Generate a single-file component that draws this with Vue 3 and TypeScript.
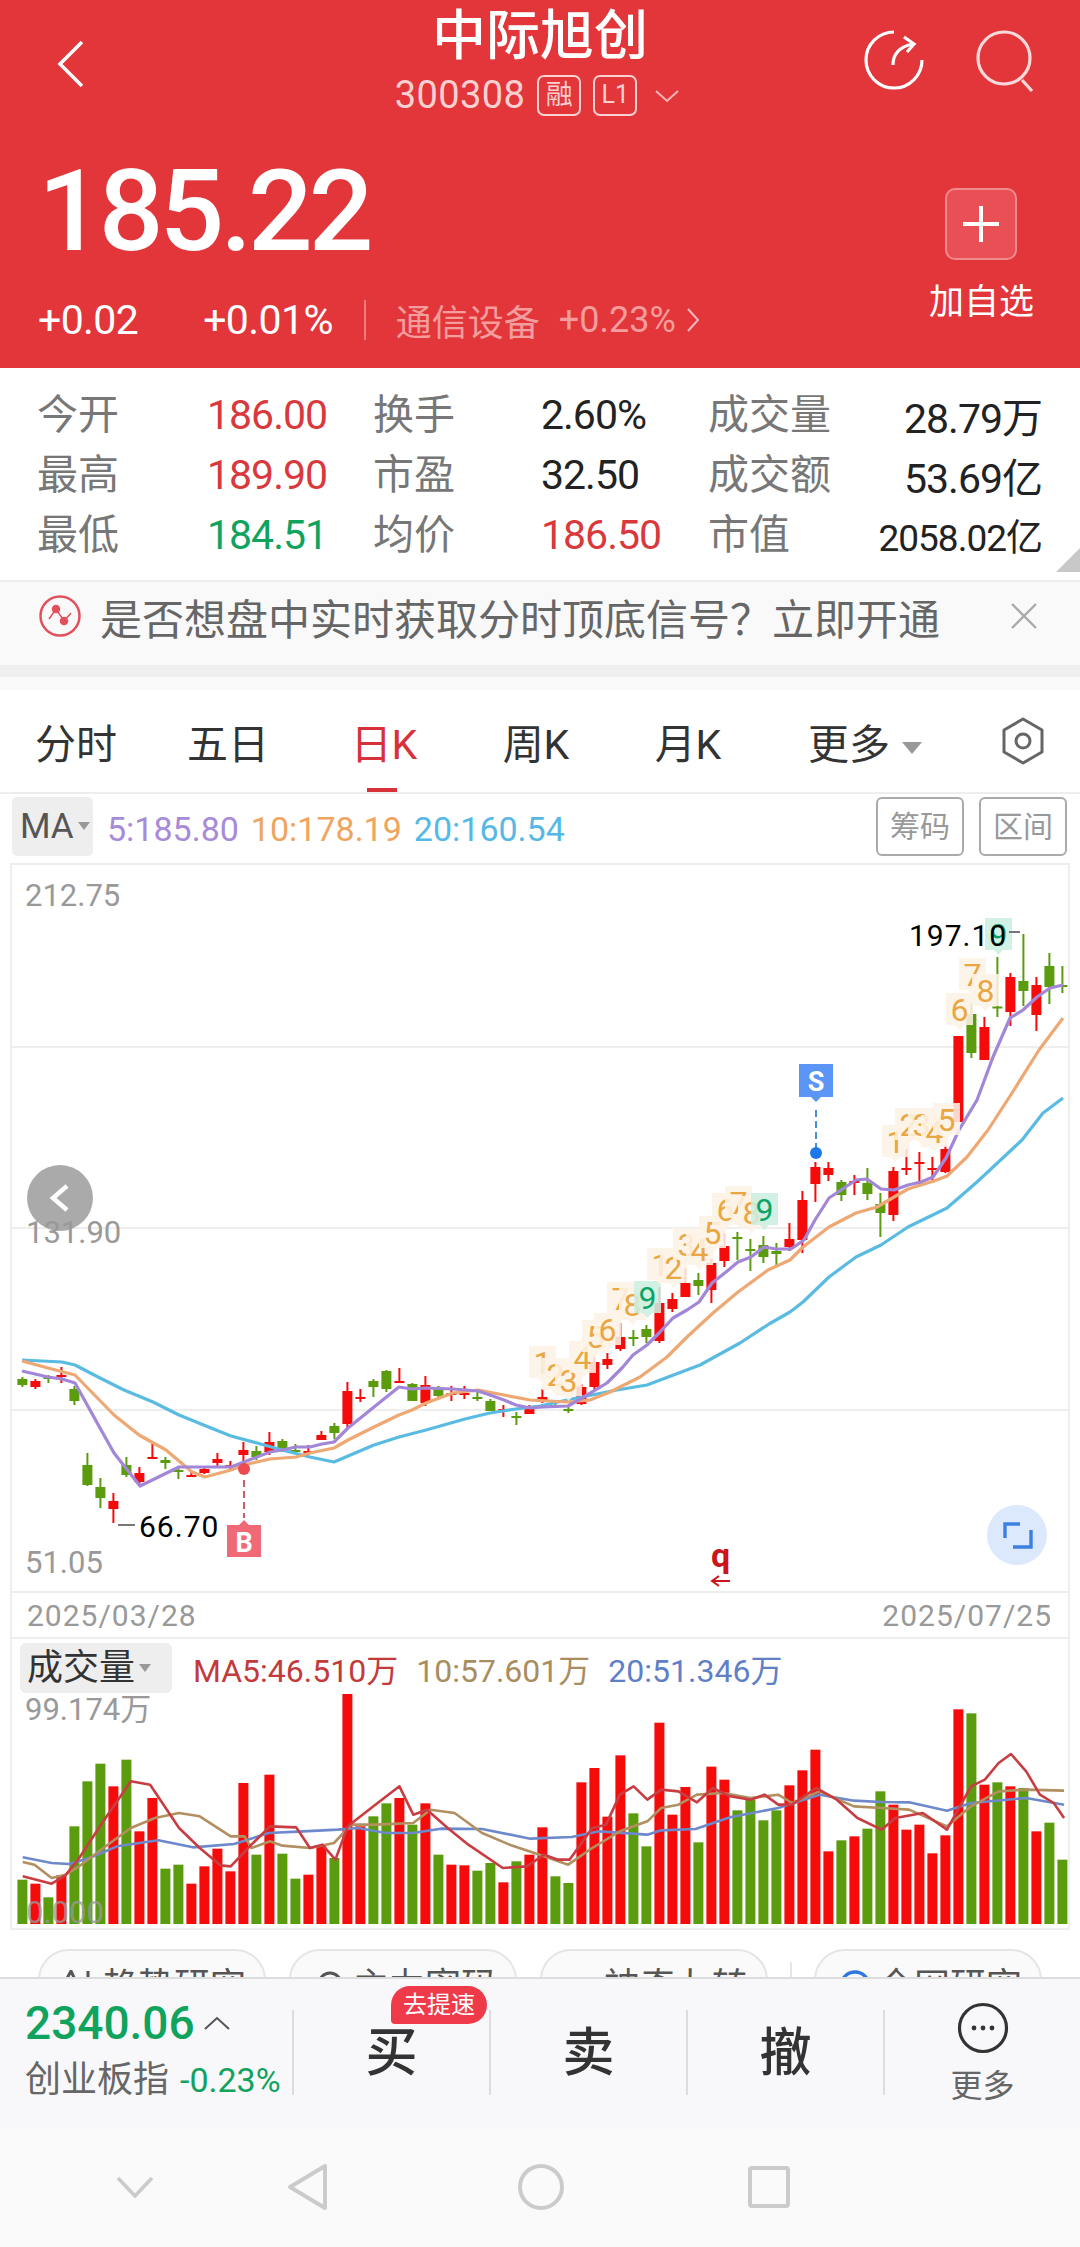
<template>
  <div class="page">
    <header class="quote">
      <div class="nav">
        <svg class="back" width="28" height="48" viewBox="0 0 28 48" fill="none" stroke="#fff" stroke-width="3.5">
          <path d="M25 2 L3 24 L25 46" />
        </svg>
        <div class="name">
          <div class="title">中际旭创</div>
          <div class="code-row">
            <span class="code">300308</span>
            <span class="tag">融</span>
            <span class="tag tag-l1">L1</span>
            <svg width="24" height="14" viewBox="0 0 24 14" fill="none" stroke="#f7b6b8" stroke-width="2">
              <path d="M1 2 L12 12 L23 2" />
            </svg>
          </div>
        </div>
        <div class="actions">
          <svg width="62" height="62" viewBox="0 0 62 62" fill="none" stroke="#fff" stroke-width="3.2">
            <path d="M31 3 A28 28 0 1 0 59 31" />
            <path d="M30 36 Q30 19 50 15" />
            <path d="M41 8 L51 15 L44 23" />
          </svg>
          <svg width="64" height="66" viewBox="0 0 64 66" fill="none" stroke="#fbd9da" stroke-width="3.2">
            <circle cx="30" cy="29" r="26" />
            <path d="M48 51 L58 62" />
          </svg>
        </div>
      </div>
      <div class="quote-body">
        <div>
          <div class="price">185.22</div>
          <div class="change-row">
            <span class="chg">+0.02</span>
            <span class="chg chg-pct">+0.01%</span>
            <span class="sep"></span>
            <span class="sector">通信设备</span>
            <span class="sector-pct">+0.23%</span>
            <svg width="14" height="26" viewBox="0 0 14 26" fill="none" stroke="#f7b6b8" stroke-width="2">
              <path d="M2 2 L12 13 L2 24" />
            </svg>
          </div>
        </div>
        <div class="add">
          <div class="add-btn">
            <svg width="38" height="38" viewBox="0 0 38 38" stroke="#fff" stroke-width="4">
              <path d="M19 1 V37 M1 19 H37" />
            </svg>
          </div>
          <div class="add-text">加自选</div>
        </div>
      </div>
    </header>

    <section class="stats">
      <template v-for="row in stats" :key="row[0].label">
        <template v-for="cell in row" :key="cell.label">
          <span class="stat-label">{{ cell.label }}</span>
          <span class="stat-value" :class="[cell.tone, cell.small ? 'small' : '']">{{ cell.value }}</span>
        </template>
      </template>
      <span class="corner"></span>
    </section>

    <div class="banner">
      <svg width="44" height="44" viewBox="0 0 44 44" fill="none" stroke="#e2505c" stroke-width="2.5">
        <circle cx="22" cy="22" r="19.5" />
        <path d="M11 25 L18 15 L26 27 L33 19" stroke-width="1.5" />
        <circle cx="18" cy="15" r="3" fill="#e2505c" />
        <circle cx="26" cy="27" r="3" fill="#e2505c" />
      </svg>
      <span class="banner-text">是否想盘中实时获取分时顶底信号？立即开通</span>
      <svg class="banner-close" width="28" height="28" viewBox="0 0 28 28" stroke="#aaa" stroke-width="2.4">
        <path d="M2 2 L26 26 M26 2 L2 26" />
      </svg>
    </div>
    <div class="band"></div>
    <div class="band-light"></div>

    <nav class="tabs">
      <span class="tab">分时</span>
      <span class="tab">五日</span>
      <span class="tab active">日K</span>
      <span class="tab">周K</span>
      <span class="tab">月K</span>
      <span class="tab more">更多<i class="caret"></i></span>
      <svg class="gear" width="44" height="48" viewBox="0 0 44 48" fill="none" stroke="#666" stroke-width="3">
        <path d="M22 2 L41 13 V35 L22 46 L3 35 V13 Z" stroke-linejoin="round" />
        <circle cx="22" cy="24" r="7" />
      </svg>
    </nav>

    <div class="ma-row">
      <span class="ma-box">MA<i class="caret caret-sm"></i></span>
      <span class="ma ma5">5:185.80</span>
      <span class="ma ma10">10:178.19</span>
      <span class="ma ma20">20:160.54</span>
      <span class="ma-btns">
        <span class="ma-btn">筹码</span>
        <span class="ma-btn">区间</span>
      </span>
    </div>

    <div class="frame">
      <svg class="kline" width="1056" height="726" viewBox="12 865 1056 726">
        <line v-for="y in [1047, 1228, 1410]" :key="y" x1="12" x2="1068" :y1="y" :y2="y" stroke="#eeeeee" stroke-width="2" />

        <g v-for="c in candles" :key="c.x" :fill="c.color" :stroke="c.color">
          <line :x1="c.x" :x2="c.x" :y1="c.hi" :y2="c.lo" stroke-width="2" />
          <rect :x="c.x - 5" :y="c.top" width="10" :height="c.h" stroke="none" />
        </g>

        <path :d="toPath(maLine20)" class="line" stroke="#5abbe2" />
        <path :d="toPath(maLine10)" class="line" stroke="#eda874" />
        <path :d="toPath(maLine5)" class="line" stroke="#a287d8" />

        <g v-for="(b, i) in badges" :key="i">
          <path
            :d="`M${b.x - 13} ${b.y - 17} h27 v32 h-9 l-4.5 5 l-4.5 -5 h-9 Z`"
            :fill="b.n === 9 ? '#cdeee0' : '#fdf2e6'"
            fill-opacity="0.88"
          />
          <text :x="b.x + 0.5" :y="b.y + 11" class="badge-num" :fill="b.n === 9 ? '#0ca567' : '#e9a643'">{{ b.n }}</text>
        </g>

        <text x="909" y="946" class="hl">197.10</text>
        <line x1="1009" x2="1020" y1="932" y2="932" stroke="#777" stroke-width="2" />
        <line x1="118" x2="135" y1="1525" y2="1525" stroke="#777" stroke-width="2" />
        <text x="139" y="1537" class="hl">66.70</text>

        <path d="M799 1064 h34 v33 h-12 l-5 5 l-5 -5 h-12 Z" fill="#5b95f5" />
        <text x="816" y="1091" class="mark">S</text>
        <line x1="816" x2="816" y1="1110" y2="1148" stroke="#4b8dd6" stroke-width="2" stroke-dasharray="7 4" />
        <circle cx="816" cy="1153" r="6" fill="#1f78ea" />

        <circle cx="244" cy="1469" r="6" fill="#ee4a52" />
        <line x1="244" x2="244" y1="1480" y2="1518" stroke="#c8606c" stroke-width="2" stroke-dasharray="7 4" />
        <path d="M227 1525 h12 l5 -5 l5 5 h12 v32 h-34 Z" fill="#ef6a76" />
        <text x="244" y="1552" class="mark">B</text>

        <text x="25" y="906" class="axis">212.75</text>
        <circle cx="60" cy="1198" r="33" fill="#a3a3a3" fill-opacity="0.92" />
        <path d="M67 1186 L53 1198 L67 1210" fill="none" stroke="#fff" stroke-width="4.5" />
        <text x="26" y="1243" class="axis">131.90</text>
        <text x="25" y="1573" class="axis">51.05</text>

        <circle cx="1017" cy="1535" r="30" fill="#dce8fb" />
        <path d="M1005 1538 V1524 H1020 M1013 1547 H1031 V1530" fill="none" stroke="#3d7fe0" stroke-width="3.4" />

        <text x="711" y="1567" class="signal">q</text>
        <path d="M730 1581 H713 M719 1576 L712 1581 L719 1586" fill="none" stroke="#c9151b" stroke-width="2" />
      </svg>

      <div class="dates">
        <span>2025/03/28</span>
        <span>2025/07/25</span>
      </div>

      <div class="vol-head">
        <span class="vol-box">成交量<i class="caret caret-sm"></i></span>
        <span class="vol-ma v5">MA5:46.510万</span>
        <span class="vol-ma v10">10:57.601万</span>
        <span class="vol-ma v20">20:51.346万</span>
      </div>
      <svg class="vol" width="1056" height="232" viewBox="12 1696 1056 232">
        <rect
          v-for="b in bars"
          :key="b.x"
          :x="b.x - 5"
          :y="b.y"
          width="10"
          :height="1926 - b.y"
          :fill="b.color"
        />
        <path :d="toPath(volLine20)" class="line" stroke="#6e88cc" />
        <path :d="toPath(volLine10)" class="line" stroke="#b28f60" />
        <path :d="toPath(volLine5)" class="line" stroke="#c93d42" />
        <text x="25" y="1722" class="axis">99.174万</text>
        <text x="26" y="1925" class="axis faint">0.000</text>
      </svg>
    </div>

    <div class="chips">
      <span class="chip">
        <svg class="chip-icon" width="34" height="14" viewBox="0 0 34 14" fill="none" stroke="#555" stroke-width="3">
          <path d="M2 14 L9 1 L15 14 M26 1 V14" />
        </svg>
        趋势研究
      </span>
      <span class="chip">
        <svg class="chip-icon" width="34" height="14" viewBox="0 0 34 14" fill="none" stroke="#555" stroke-width="3">
          <circle cx="17" cy="14" r="11" />
        </svg>
        主力密码
      </span>
      <span class="chip">
        <svg class="chip-icon" width="34" height="14" viewBox="0 0 34 14" fill="#3d7fe0">
          <circle cx="8" cy="11" r="3" />
          <circle cx="24" cy="11" r="3" />
        </svg>
        神奇九转
      </span>
      <span class="chip-sep"></span>
      <span class="chip">
        <svg class="chip-icon" width="34" height="14" viewBox="0 0 34 14" fill="none" stroke="#2f76e0" stroke-width="3.4">
          <circle cx="17" cy="16" r="14" />
          <path d="M5 11 H29" />
        </svg>
        全网研究
      </span>
    </div>

    <div class="trade">
      <div class="index">
        <div class="index-top">
          <span class="index-val">2340.06</span>
          <svg width="26" height="14" viewBox="0 0 26 14" fill="none" stroke="#555" stroke-width="2">
            <path d="M1 13 L13 2 L25 13" />
          </svg>
        </div>
        <div class="index-bottom">
          <span class="index-name">创业板指</span>
          <span class="index-pct">-0.23%</span>
        </div>
      </div>
      <div class="act">
        买
        <span class="speed">去提速</span>
      </div>
      <div class="act">卖</div>
      <div class="act">撤</div>
      <div class="act more-act">
        <svg width="52" height="52" viewBox="0 0 52 52">
          <circle cx="26" cy="26" r="23.5" fill="none" stroke="#333" stroke-width="3.2" />
          <circle cx="17" cy="26" r="2.4" fill="#333" />
          <circle cx="26" cy="26" r="2.4" fill="#333" />
          <circle cx="35" cy="26" r="2.4" fill="#333" />
        </svg>
        <span>更多</span>
      </div>
    </div>

    <div class="sysnav">
      <svg width="38" height="22" viewBox="0 0 38 22" fill="none" stroke="#cbcbcb" stroke-width="3.6">
        <path d="M2 2 L19 20 L36 2" />
      </svg>
      <svg width="42" height="48" viewBox="0 0 42 48" fill="none" stroke="#cbcbcb" stroke-width="4">
        <path d="M38 3 V45 L3 24 Z" stroke-linejoin="round" />
      </svg>
      <svg width="48" height="48" viewBox="0 0 48 48" fill="none" stroke="#cbcbcb" stroke-width="4">
        <circle cx="24" cy="24" r="21" />
      </svg>
      <svg width="42" height="42" viewBox="0 0 42 42" fill="none" stroke="#cbcbcb" stroke-width="4">
        <rect x="2" y="2" width="38" height="38" rx="2" />
      </svg>
    </div>
  </div>
</template>

<script setup lang="ts">
type Point = [number, number]

const RED = '#f60b0b'
const GREEN = '#5a9c0e'

// x of the i-th trading day, shared by the candles and the volume bars
const dayX = (i: number) => 22.4 + 13 * i

const stats = [
  [
    { label: '今开', value: '186.00', tone: 'up' },
    { label: '换手', value: '2.60%', tone: '' },
    { label: '成交量', value: '28.79万', tone: 'end' },
  ],
  [
    { label: '最高', value: '189.90', tone: 'up' },
    { label: '市盈', value: '32.50', tone: '' },
    { label: '成交额', value: '53.69亿', tone: 'end' },
  ],
  [
    { label: '最低', value: '184.51', tone: 'down' },
    { label: '均价', value: '186.50', tone: 'up' },
    { label: '市值', value: '2058.02亿', tone: 'end', small: true },
  ],
]

// high, body top, body bottom, low, 1 = red
const rawCandles: number[][] = [
  [1377, 1379, 1385, 1387, 0], [1379, 1381, 1387, 1389, 1], [1375, 1377, 1379, 1383, 0], [1367, 1375, 1377, 1383, 1],
  [1386, 1389, 1401, 1405, 0], [1453, 1465, 1485, 1486, 0], [1478, 1487, 1498, 1508, 0], [1493, 1501, 1509, 1523, 1],
  [1457, 1465, 1475, 1477, 0], [1467, 1473, 1482, 1485, 1], [1443, 1457, 1458, 1459, 1], [1457, 1460, 1463, 1469, 0],
  [1467, 1470, 1471, 1479, 0], [1470, 1475, 1477, 1477, 1], [1468, 1469, 1473, 1474, 1], [1453, 1459, 1463, 1467, 1],
  [1461, 1465, 1466, 1470, 1], [1442, 1450, 1455, 1461, 1], [1446, 1451, 1457, 1460, 0], [1432, 1442, 1452, 1455, 1],
  [1439, 1441, 1450, 1452, 0], [1444, 1450, 1451, 1454, 0], [1445, 1451, 1451, 1454, 1], [1431, 1435, 1440, 1440, 1],
  [1423, 1426, 1433, 1439, 0], [1382, 1391, 1424, 1429, 1], [1389, 1397, 1399, 1402, 1], [1379, 1381, 1387, 1397, 0],
  [1370, 1371, 1389, 1392, 0], [1368, 1381, 1382, 1382, 1], [1383, 1384, 1401, 1401, 0], [1376, 1385, 1403, 1406, 1],
  [1386, 1389, 1396, 1397, 0], [1386, 1393, 1395, 1401, 1], [1386, 1393, 1394, 1399, 1], [1389, 1397, 1398, 1401, 0],
  [1399, 1401, 1411, 1411, 0], [1405, 1409, 1411, 1417, 1], [1412, 1416, 1417, 1425, 0], [1405, 1409, 1414, 1414, 1],
  [1389, 1397, 1402, 1403, 1], [1400, 1405, 1405.5, 1408, 0], [1406, 1409, 1410, 1413, 0], [1384, 1387, 1404, 1405, 1],
  [1357, 1362, 1387, 1389, 1], [1353, 1359, 1365, 1369, 1], [1323, 1337, 1349, 1351, 1], [1330, 1337, 1338, 1346, 0],
  [1325, 1329, 1337, 1343, 0], [1287, 1303, 1341, 1343, 1], [1293, 1299, 1309, 1312, 1], [1268, 1283, 1297, 1297, 1],
  [1273, 1280, 1286, 1295, 0], [1259, 1263, 1290, 1303, 1], [1233, 1246, 1261, 1267, 1], [1232, 1237, 1238, 1260, 0],
  [1239, 1249, 1250, 1271, 0], [1236, 1245, 1257, 1263, 0], [1243, 1251, 1254, 1265, 0], [1223, 1239, 1247, 1251, 1],
  [1191, 1200, 1240, 1253, 1], [1162, 1167, 1184, 1202, 1], [1162, 1168, 1175, 1181, 1], [1180, 1182, 1195, 1201, 0],
  [1175, 1181, 1182, 1195, 1], [1168, 1183, 1194, 1200, 0], [1193, 1204, 1213, 1237, 0], [1167, 1171, 1215, 1221, 1],
  [1149, 1168, 1169, 1175, 1], [1152, 1162, 1163, 1184, 1], [1157, 1168, 1169, 1182, 1], [1145, 1149, 1172, 1173, 1],
  [1036, 1036, 1122, 1122, 1], [1003, 1014, 1053, 1058, 0], [1017, 1027, 1060, 1060, 1], [957, 1006.5, 1008, 1017, 0],
  [973, 977, 1012, 1026, 1], [934, 981, 991, 1006, 0], [977, 985, 1015, 1031, 1], [953, 966, 987, 1004, 0],
  [966, 985, 986, 993, 0],
]

const candles = rawCandles.map((c, i) => ({
  x: dayX(i),
  hi: c[0],
  top: c[1],
  h: Math.max(c[2] - c[1], 2),
  lo: c[3],
  color: c[4] ? RED : GREEN,
}))

const maLine5: Point[] = [
  [22, 1371], [48, 1377], [62, 1379], [75, 1383], [100, 1428], [114, 1453], [140, 1486], [179, 1467], [231, 1467],
  [244, 1462], [270, 1452], [282, 1450], [296, 1447], [310, 1447], [322, 1444], [334, 1442], [348, 1428], [374, 1407],
  [399, 1387], [412, 1389], [426, 1388], [453, 1389], [478, 1391], [490, 1395], [504, 1400], [516, 1405], [530, 1408],
  [543, 1407], [568, 1406], [582, 1398], [607, 1383], [622, 1368], [633, 1355], [647, 1345], [660, 1332], [673, 1318],
  [687, 1310], [699, 1302], [712, 1283], [726, 1272], [738, 1262], [751, 1257], [764, 1247], [776, 1249], [791, 1249],
  [804, 1240], [815, 1220], [829, 1198], [841, 1190], [856, 1180], [867, 1179], [881, 1189], [894, 1190], [908, 1185],
  [921, 1182], [933, 1177], [946, 1158], [959, 1130], [977, 1100], [993, 1057], [1010, 1018], [1023, 1010], [1037, 997],
  [1050, 988], [1063, 985],
]

const maLine10: Point[] = [
  [22, 1361], [48, 1368], [75, 1375], [114, 1415], [139, 1435], [166, 1450], [192, 1472], [205, 1477], [231, 1470],
  [244, 1465], [270, 1459], [296, 1457], [310, 1453], [334, 1448], [348, 1440], [374, 1427], [399, 1415], [412, 1410],
  [426, 1403], [453, 1393], [478, 1390], [504, 1395], [530, 1400], [568, 1402], [590, 1400], [610, 1392], [640, 1377],
  [667, 1357], [687, 1337], [713, 1313], [738, 1292], [768, 1270], [790, 1260], [803, 1247], [829, 1227], [856, 1213],
  [877, 1207], [894, 1197], [908, 1189], [934, 1181], [947, 1176], [967, 1157], [988, 1130], [1012, 1093], [1039, 1050],
  [1063, 1018],
]

const maLine20: Point[] = [
  [22, 1360], [62, 1362], [75, 1365], [100, 1378], [124, 1390], [153, 1402], [179, 1415], [206, 1426], [231, 1436],
  [257, 1443], [282, 1450], [310, 1457], [334, 1462], [374, 1445], [399, 1437], [426, 1430], [465, 1419], [490, 1413],
  [516, 1409], [540, 1406], [567, 1400], [617, 1390], [647, 1385], [700, 1365], [740, 1343], [769, 1324], [790, 1312],
  [803, 1302], [829, 1277], [856, 1257], [881, 1245], [908, 1227], [947, 1208], [977, 1182], [1022, 1140], [1043, 1113],
  [1063, 1098],
]

const badgeSpots: number[][] = [
  [542, 1363, 1], [555, 1375, 2], [568, 1381, 3], [582, 1358, 4], [595, 1337, 5], [607, 1330, 6], [620, 1299, 7],
  [632, 1305, 8], [647, 1298, 9], [660, 1265, 1], [673, 1268, 2], [686, 1245, 3], [699, 1250, 4], [712, 1233, 5],
  [725, 1210, 6], [738, 1203, 7], [751, 1213, 8], [764, 1210, 9], [895, 1142, 1], [908, 1125, 2], [921, 1125, 3],
  [934, 1132, 4], [946, 1120, 5], [959, 1010, 6], [972, 975, 7], [985, 991, 8], [998, 935, 9],
]
const badges = badgeSpots.map(([x, y, n]) => ({ x, y, n }))

// bar tops, 1 = red
const barTops: number[][] = [
  [785, 0], [797, 1], [838, 0], [772, 1], [625, 0], [490, 0], [437, 0], [505, 1], [425, 0], [640, 1], [540, 1],
  [752, 0], [740, 0], [797, 1], [745, 1], [692, 1], [760, 1], [495, 1], [710, 0], [470, 1], [707, 0], [782, 0],
  [770, 1], [685, 1], [720, 0], [227, 1], [625, 1], [595, 0], [556, 0], [540, 1], [620, 0], [556, 1], [710, 0],
  [740, 1], [742, 1], [758, 0], [735, 0], [793, 1], [730, 0], [710, 1], [628, 1], [775, 0], [795, 0], [493, 1],
  [450, 1], [596, 1], [412, 1], [586, 0], [685, 0], [314, 1], [590, 1], [507, 1], [673, 0], [446, 1], [485, 1],
  [577, 0], [545, 0], [607, 0], [577, 0], [502, 1], [457, 1], [395, 1], [700, 1], [667, 0], [655, 1], [632, 0],
  [520, 0], [560, 1], [635, 1], [620, 1], [706, 1], [652, 1], [274, 1], [286, 0], [500, 1], [493, 0], [505, 1],
  [510, 0], [640, 1], [614, 0], [725, 0],
]
const volY = (v: number) => 1620 + v / 3
const bars = barTops.map(([top, red], i) => ({ x: dayX(i), y: volY(top), color: red ? RED : GREEN }))

const volPoints = (list: Point[]): Point[] => list.map(([x, y]) => [x / 1.452, volY(y)])

const volLine5 = volPoints([
  [33, 775], [75, 797], [95, 772], [115, 720], [150, 610], [190, 490], [218, 500], [260, 630], [290, 690], [320, 742],
  [335, 745], [365, 680], [392, 625], [430, 628], [450, 690], [468, 680], [487, 725], [505, 625], [545, 560], [580, 505],
  [600, 590], [620, 575], [650, 630], [680, 680], [730, 750], [765, 745], [790, 710], [810, 725], [827, 725], [860, 630],
  [880, 620], [900, 530], [920, 505], [940, 545], [960, 515], [985, 520], [1012, 553], [1035, 510], [1060, 535], [1090, 545],
  [1110, 530], [1130, 560], [1150, 560], [1185, 510], [1215, 545], [1245, 600], [1280, 635], [1300, 600], [1340, 585],
  [1375, 635], [1410, 505], [1430, 485], [1450, 435], [1468, 408], [1490, 460], [1510, 530], [1530, 555], [1545, 600],
])

const volLine10 = volPoints([
  [33, 732], [50, 740], [75, 780], [95, 770], [115, 745], [150, 690], [190, 630], [225, 600], [260, 585], [290, 595],
  [335, 655], [355, 655], [365, 690], [392, 670], [410, 683], [450, 690], [485, 675], [510, 620], [545, 620], [600, 615],
  [625, 575], [660, 585], [700, 645], [740, 680], [790, 715], [825, 740], [860, 690], [900, 640], [940, 610], [960, 570],
  [985, 560], [1012, 530], [1050, 525], [1090, 540], [1130, 530], [1150, 555], [1190, 520], [1240, 565], [1280, 570],
  [1320, 575], [1375, 625], [1410, 565], [1450, 520], [1490, 515], [1545, 518],
])

const volLine20 = volPoints([
  [33, 718], [75, 735], [100, 738], [130, 720], [170, 685], [230, 667], [280, 688], [340, 678], [390, 645], [440, 640],
  [490, 635], [520, 630], [560, 645], [600, 645], [640, 632], [700, 633], [770, 662], [830, 657], [870, 640], [940, 650],
  [960, 637], [1010, 633], [1060, 598], [1130, 570], [1190, 530], [1240, 548], [1280, 552], [1320, 553], [1375, 578],
  [1410, 555], [1490, 540], [1545, 560],
])

const toPath = (pts: Point[]) => pts.map(([x, y], i) => `${i ? 'L' : 'M'}${x} ${y}`).join(' ')
</script>

<style>
html,
body {
  margin: 0;
  background: #fff;
}
</style>

<style scoped>
.page {
  width: 1080px;
  height: 2247px;
  overflow: hidden;
  display: flex;
  flex-direction: column;
  font-family: Roboto, "Noto Sans CJK SC", sans-serif;
  color: #333;
  background: #fff;
}

/* red quote header */
.quote {
  height: 368px;
  background: #e2363a;
  color: #fff;
  flex: none;
}

.nav {
  height: 122px;
  display: grid;
  grid-template-columns: 1fr auto 1fr;
  padding-top: 7px;
  box-sizing: border-box;
}

.back {
  margin: 33px 0 0 57px;
}

.name {
  display: flex;
  flex-direction: column;
  align-items: center;
}

.title {
  font-size: 54px;
  line-height: 60px;
  font-weight: 500;
}

.code-row {
  display: flex;
  align-items: center;
  gap: 12px;
  margin-top: 8px;
  color: #fbd0d1;
  margin-left: -6px;
}

.code {
  font-size: 38px;
  letter-spacing: 0.4px;
  line-height: 41px;
}

.tag {
  width: 44px;
  height: 41px;
  border: 2px solid #fbd0d1;
  border-radius: 7px;
  box-sizing: border-box;
  font-size: 27px;
  line-height: 36px;
  text-align: center;
}

.tag-l1 {
  margin-right: 6px;
  font-size: 25px;
}

.actions {
  display: flex;
  justify-content: flex-end;
  gap: 49px;
  padding: 22px 42px 0 0;
  align-items: flex-start;
}

.quote-body {
  display: flex;
  justify-content: space-between;
  padding: 38px 46px 0 38px;
}

.price {
  font-size: 114px;
  line-height: 102px;
  font-weight: 500;
  letter-spacing: -4px;
}

.change-row {
  display: flex;
  align-items: center;
  height: 40px;
  margin-top: 38px;
}

.chg {
  font-size: 41px;
  letter-spacing: -0.6px;
}

.chg-pct {
  margin-left: 65px;
}

.sep {
  width: 2px;
  height: 40px;
  background: #ef7b7e;
  margin: 0 30px 0 31px;
}

.sector {
  font-size: 36px;
  color: #f59c9d;
}

.sector-pct {
  margin: 0 10px 0 19px;
  font-size: 36px;
  color: #f59c9d;
}

.add {
  display: flex;
  flex-direction: column;
  align-items: center;
  padding-top: 28px;
}

.add-btn {
  width: 72px;
  height: 72px;
  border: 2px solid #f08a8d;
  border-radius: 10px;
  box-sizing: border-box;
  background: #e85056;
  display: flex;
  align-items: center;
  justify-content: center;
}

.add-text {
  margin-top: 20px;
  font-size: 35px;
  line-height: 46px;
  white-space: nowrap;
}

/* stats table */
.stats {
  position: relative;
  height: 214px;
  flex: none;
  box-sizing: border-box;
  padding: 17px 38px 0 37px;
  display: grid;
  grid-template-columns: 170px 166px 168px 167px 130px 1fr;
  grid-auto-rows: 60px;
  align-items: center;
  border-bottom: 2px solid #eee;
}

.stat-label {
  font-size: 41px;
  line-height: 50px;
  color: #777;
  white-space: nowrap;
  margin-bottom: 1px;
}

.stat-value {
  font-size: 41px;
  letter-spacing: -1px;
  color: #222;
  white-space: nowrap;
}

.stat-value.up {
  color: #d9383d;
}

.stat-value.down {
  color: #10a35e;
}

.stat-value.end {
  text-align: right;
}

.stat-value.small {
  font-size: 37px;
}

.corner {
  position: absolute;
  right: 0;
  bottom: 8px;
  width: 0;
  height: 0;
  border-left: 24px solid transparent;
  border-bottom: 24px solid #c8c8c8;
}

/* upsell banner */
.banner {
  height: 83px;
  flex: none;
  display: flex;
  align-items: center;
  background: #f9f9f9;
  padding: 0 42px 15px 38px;
  box-sizing: border-box;
}

.banner-text {
  margin-left: 18px;
  font-size: 42px;
  color: #666;
  white-space: nowrap;
}

.banner-close {
  margin-left: auto;
}

.band {
  height: 12px;
  flex: none;
  background: #efefef;
}

.band-light {
  height: 13px;
  flex: none;
  background: #f9f9f9;
}

/* period tabs */
.tabs {
  height: 104px;
  flex: none;
  display: flex;
  align-items: center;
  box-sizing: border-box;
  border-bottom: 2px solid #eee;
  position: relative;
}

.tab {
  width: 152px;
  text-align: center;
  font-size: 41px;
  color: #333;
  white-space: nowrap;
}

.tab.active {
  margin-left: 4px;
  color: #d8313a;
  position: relative;
}

.tab.active::after {
  content: "";
  position: absolute;
  left: 59px;
  bottom: -21px;
  width: 30px;
  height: 4px;
  background: #d8313a;
}

.tab.more {
  width: auto;
  margin-left: 44px;
}

.caret {
  display: inline-block;
  margin-left: 12px;
  vertical-align: 5px;
  border-left: 10px solid transparent;
  border-right: 10px solid transparent;
  border-top: 12px solid #999;
}

.caret-sm {
  margin-left: 4px;
  vertical-align: 8px;
  border-left-width: 6px;
  border-right-width: 6px;
  border-top-width: 8px;
}

.gear {
  margin-left: auto;
  margin-right: 35px;
}

/* moving average legend */
.ma-row {
  height: 69px;
  flex: none;
  display: flex;
  align-items: center;
  box-sizing: border-box;
  padding: 0 13px 4px 12px;
}

.ma-box {
  width: 81px;
  height: 59px;
  background: #eee;
  border-radius: 5px;
  font-size: 35px;
  line-height: 59px;
  color: #555;
  padding-left: 8px;
  box-sizing: border-box;
  white-space: nowrap;
  margin-right: 14px;
}

.ma {
  font-size: 34px;
  margin: 4px 12px 0 0;
  white-space: nowrap;
}

.ma5 {
  color: #a78bd8;
}

.ma10 {
  color: #efa560;
}

.ma20 {
  color: #55b8e6;
}

.ma-btns {
  margin-left: auto;
  display: flex;
  gap: 15px;
}

.ma-btn {
  width: 88px;
  height: 59px;
  border: 2px solid #aaa;
  border-radius: 6px;
  box-sizing: border-box;
  font-size: 30px;
  line-height: 55px;
  text-align: center;
  color: #999;
}

/* chart frame */
.frame {
  margin: 0 10px;
  height: 1067px;
  flex: none;
  box-sizing: border-box;
  border: 2px solid #eee;
}

.kline,
.vol {
  display: block;
}

.line {
  fill: none;
  stroke-width: 3.2;
  stroke-linejoin: round;
}

.vol .line {
  stroke-width: 2.6;
}

.badge-num {
  font-size: 32px;
  text-anchor: middle;
}

.hl {
  font-size: 30px;
  letter-spacing: 1px;
  fill: #000;
}

.mark {
  font-size: 27px;
  font-weight: 700;
  fill: #fff;
  text-anchor: middle;
}

.axis {
  font-size: 31px;
  fill: #999;
}

.axis.faint {
  fill-opacity: 0.8;
}

.signal {
  font-size: 34px;
  font-weight: 700;
  fill: #c9151b;
}

.dates {
  height: 48px;
  box-sizing: border-box;
  display: flex;
  justify-content: space-between;
  align-items: center;
  padding: 0 16px 0 15px;
  border-top: 2px solid #eee;
  border-bottom: 2px solid #eee;
  font-size: 30px;
  letter-spacing: 1px;
  color: #999;
}

.vol-head {
  height: 55px;
  box-sizing: border-box;
  display: flex;
  align-items: center;
  padding: 3px 0 0 8px;
}

.vol-box {
  width: 152px;
  height: 50px;
  background: #eee;
  border-radius: 6px;
  font-size: 36px;
  line-height: 50px;
  color: #333;
  padding-left: 7px;
  box-sizing: border-box;
  white-space: nowrap;
  margin-right: 21px;
}

.vol-ma {
  font-size: 32px;
  margin-right: 18px;
  white-space: nowrap;
}

.v5 {
  color: #c33a3c;
}

.v10 {
  color: #a98d5f;
}

.v20 {
  color: #5f80c6;
}

/* chips, cut by the trade bar */
.chips {
  height: 47px;
  flex: none;
  overflow: hidden;
  display: flex;
  padding: 19px 0 0 38px;
  box-sizing: border-box;
  gap: 23px;
}

.chip {
  width: 228px;
  height: 62px;
  flex: none;
  display: flex;
  justify-content: space-between;
  border: 2px solid #e5e5e5;
  border-radius: 31px;
  box-sizing: border-box;
  background: #fafafa;
  font-size: 36px;
  line-height: 48px;
  padding: 12px 18px 0 22px;
  color: #555;
  white-space: nowrap;
}

.chip-icon {
  flex: none;
  margin-top: 7px;
}

.chip-sep {
  width: 2px;
  height: 40px;
  flex: none;
  margin: 13px -1px 0;
  background: #e5e5e5;
}

/* bottom trade bar */
.trade {
  height: 150px;
  flex: none;
  display: flex;
  box-sizing: border-box;
  border-top: 2px solid #ddd;
  background: #f8f8fa;
  padding-top: 31px;
}

.index {
  width: 294px;
  height: 85px;
  padding-left: 25px;
  box-sizing: border-box;
  border-right: 2px solid #ddd;
  white-space: nowrap;
}

.index-top {
  display: flex;
  align-items: center;
  height: 40px;
  margin-top: -7px;
}

.index-val {
  font-size: 46px;
  font-weight: 500;
  color: #10a35e;
}

.index-top svg {
  margin-left: 9px;
}

.index-bottom {
  display: flex;
  align-items: center;
  margin-top: 17px;
  line-height: 40px;
}

.index-name {
  font-size: 36px;
  color: #666;
}

.index-pct {
  margin-left: 11px;
  font-size: 34px;
  color: #10a35e;
}

.act {
  position: relative;
  width: 197px;
  height: 85px;
  box-sizing: border-box;
  border-right: 2px solid #ddd;
  text-align: center;
  font-size: 52px;
  line-height: 88px;
  font-weight: 500;
  color: #333;
}

.speed {
  position: absolute;
  left: 97px;
  top: -24px;
  width: 96px;
  height: 38px;
  background: #ef3a49;
  border-radius: 19px 19px 19px 4px;
  color: #fff;
  font-size: 24px;
  line-height: 38px;
  font-weight: 400;
  z-index: 1;
}

.more-act {
  flex: 1;
  height: auto;
  border-right: none;
  display: flex;
  flex-direction: column;
  align-items: center;
  font-size: 32px;
  line-height: 40px;
  font-weight: 400;
  color: #666;
  margin-top: -8px;
}

.more-act svg {
  flex: none;
}

.more-act span {
  margin-top: 12px;
}

/* system nav */
.sysnav {
  flex: 1;
  background: #fafafa;
  display: flex;
  align-items: center;
  padding: 0 0 0 116px;
  box-sizing: border-box;
}

.sysnav svg:nth-child(2) {
  margin-left: 133px;
}

.sysnav svg:nth-child(3) {
  margin-left: 188px;
}

.sysnav svg:nth-child(4) {
  margin-left: 183px;
}
</style>
